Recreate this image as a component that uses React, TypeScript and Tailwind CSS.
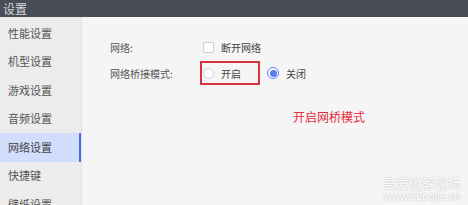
export default function App() {
  const items = ["性能设置", "机型设置", "游戏设置", "音频设置", "网络设置", "快捷键", "壁纸设置"];
  const font = { fontFamily: '"Noto Sans CJK SC", "Liberation Sans", sans-serif' };

  return (
    <div className="flex h-[205px] w-[468px] flex-col overflow-hidden bg-[#f5f5f5]" style={font}>
      <div className="flex h-[17px] shrink-0 items-center bg-[#4a4c56] px-[3px] text-[12px] leading-none text-[#d8d9de]">
        设置
      </div>

      <div className="flex flex-1 overflow-hidden">
        <div className="flex w-[82px] shrink-0 flex-col border-r border-[#e2e2e2] bg-[#ececec] pt-[2px]">
          {items.map((label) => (
            <div
              key={label}
              className={`flex h-[28.5px] shrink-0 items-center pl-[8px] text-[11px] leading-none ${
                label === "网络设置"
                  ? "border-r-2 border-[#4a6ee8] bg-[#d2dcfc] text-[#444]"
                  : "text-[#555]"
              }`}
            >
              {label}
            </div>
          ))}
        </div>

        <div className="relative flex-1">
          <div className="flex flex-col pl-[28px] pt-[23px] text-[10px] text-[#555]">
            <div className="flex h-[14px] items-center">
              <div className="w-[93px]">网络:</div>
              <div className="h-[11px] w-[11px] rounded-[2px] border border-[#cfcfcf] bg-white" />
              <div className="ml-[7px] text-[#444]">断开网络</div>
            </div>

            <div className="mt-[12px] flex h-[14px] items-center">
              <div className="w-[90px]">网络桥接模式:</div>
              <div className="-my-[5px] flex h-[24px] w-[60px] items-center border-2 border-[#d8323e] pl-[1px]">
                <div className="h-[11px] w-[11px] rounded-full border border-[#cfcfcf] bg-white" />
                <div className="ml-[7px] text-[#444]">开启</div>
              </div>
              <div className="ml-[7px] flex h-[12px] w-[12px] items-center justify-center rounded-full border border-[#5b7cf0] bg-white">
                <div className="h-[7px] w-[7px] rounded-full bg-[#5b7cf0]" />
              </div>
              <div className="ml-[7px] text-[#444]">关闭</div>
            </div>

            <div className="mt-[28px] pl-[183px] text-[12px] text-[#e52b3f]">开启网桥模式</div>
          </div>

          <div className="absolute bottom-[3px] right-[6px] flex w-[80px] flex-col items-center gap-[1px] text-white [text-shadow:0_0_2px_rgba(0,0,0,0.3)]">
            <div className="text-[13px] leading-[14px]">吾爱破解论坛</div>
            <div className="text-[11px] leading-[11px]" style={{ fontFamily: '"Liberation Sans", sans-serif' }}>
              www.52pojie.cn
            </div>
          </div>
        </div>
      </div>
    </div>
  );
}
